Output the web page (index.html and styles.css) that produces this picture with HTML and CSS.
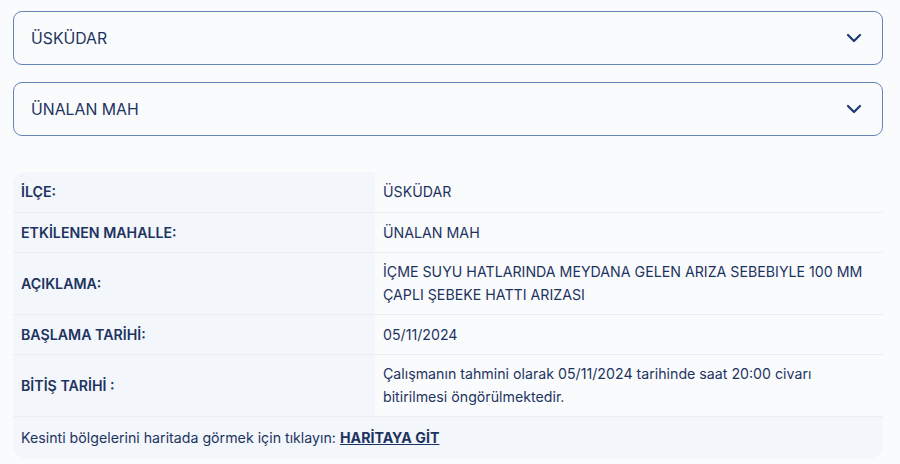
FILE: index.html
```html
<!DOCTYPE html>
<html lang="tr">
<head>
  <meta charset="UTF-8" />
  <meta name="viewport" content="width=device-width, initial-scale=1.0"/>
  <title>Arıza Kesinti Bilgisi</title>
  <link rel="stylesheet" href="styles.css">
</head>
<body>

<div class="page">
  <div class="select">
    <span>ÜSKÜDAR</span>
    <svg class="chev" width="16" height="10" viewBox="0 0 16 10"><path d="M2 2l6 6 6-6" fill="none" stroke="#1b3a70" stroke-width="2.2" stroke-linecap="round" stroke-linejoin="round"/></svg>
  </div>
  <div class="select">
    <span>ÜNALAN MAH</span>
    <svg class="chev" width="16" height="10" viewBox="0 0 16 10"><path d="M2 2l6 6 6-6" fill="none" stroke="#1b3a70" stroke-width="2.2" stroke-linecap="round" stroke-linejoin="round"/></svg>
  </div>

  <table class="info">
    <tr class="r1">
      <th>İLÇE:</th>
      <td>ÜSKÜDAR</td>
    </tr>
    <tr class="r1">
      <th>ETKİLENEN MAHALLE:</th>
      <td>ÜNALAN MAH</td>
    </tr>
    <tr class="r2">
      <th>AÇIKLAMA:</th>
      <td>İÇME SUYU HATLARINDA MEYDANA GELEN ARIZA SEBEBIYLE 100 MM<br>ÇAPLI ŞEBEKE HATTI ARIZASI</td>
    </tr>
    <tr class="r1">
      <th>BAŞLAMA TARİHİ:</th>
      <td>05/11/2024</td>
    </tr>
    <tr class="r2">
      <th>BİTİŞ TARİHİ :</th>
      <td>Çalışmanın tahmini olarak 05/11/2024 tarihinde saat 20:00 civarı<br>bitirilmesi öngörülmektedir.</td>
    </tr>
    <tr class="foot">
      <td colspan="2">Kesinti bölgelerini haritada görmek için tıklayın: <a href="#">HARİTAYA GİT</a></td>
    </tr>
  </table>
</div>

</body>
</html>
```

FILE: styles.css
```css
body { margin: 0; background: #fafbfd; font-family: "Inter", "Noto Sans", sans-serif; color: #1d3461; }
.page { padding: 11px 17px 0 13px; }
.select { height: 52px; border: 1.5px solid #6584b8; border-radius: 9px; display: flex; align-items: center; justify-content: space-between; padding: 0 20px 0 17px; margin-bottom: 17px; font-size: 15.8px; }
.select .chev { display: block; }
.info { width: 100%; border-collapse: collapse; margin-top: 36px; font-size: 14.2px; }
.info th { width: 346px; background: #f3f6fb; text-align: left; font-weight: 600; padding: 0 8px; }
.info td { padding: 0 8px; line-height: 23px; }
.info tr { border-bottom: 1.5px solid #e9edf3; }
.info tr.r1 { height: 40px; }
.info tr.r2 { height: 62px; }
.info tr:first-child th { border-top-left-radius: 12px; }
.info tr.foot { border-bottom: none; height: 42px; }
.info tr.foot td { background: #f3f6fb; border-radius: 0 0 12px 12px; }
.info a { color: #1d3461; font-weight: 700; }
```
